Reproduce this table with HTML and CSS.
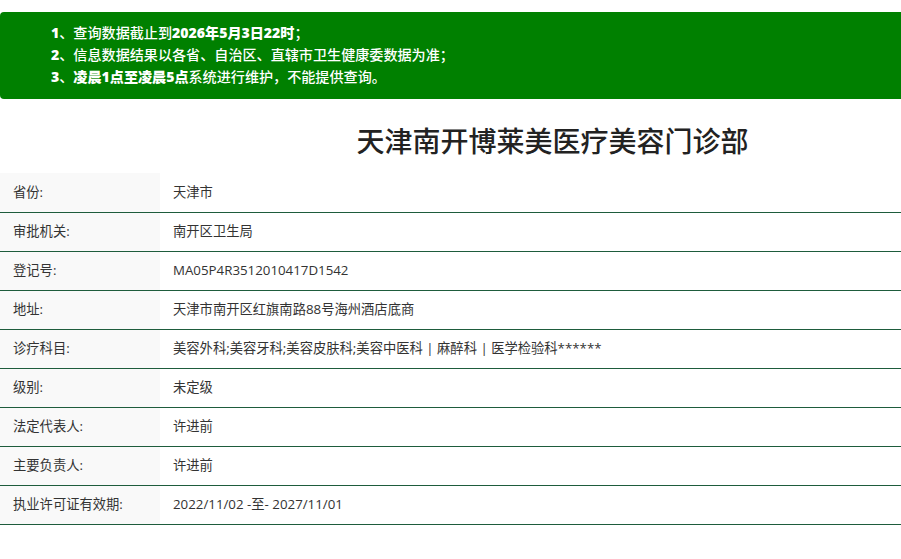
FILE: index.html
```html
<!DOCTYPE html>
<html lang="zh-CN">
<head>
<meta charset="utf-8">
<title>天津南开博莱美医疗美容门诊部</title>
<link rel="stylesheet" href="styles.css">
</head>
<body>
<div class="notice">
  <p><b>1</b>、查询数据截止到<b>2026年5月3日22时</b>；</p>
  <p><b>2</b>、信息数据结果以各省、自治区、直辖市卫生健康委数据为准；</p>
  <p><b>3</b>、<b>凌晨1点至凌晨5点</b>系统进行维护，不能提供查询。</p>
</div>
<h1 class="title">天津南开博莱美医疗美容门诊部</h1>
<table class="info">
  <tr><th>省份:</th><td>天津市</td></tr>
  <tr><th>审批机关:</th><td>南开区卫生局</td></tr>
  <tr><th>登记号:</th><td>MA05P4R3512010417D1542</td></tr>
  <tr><th>地址:</th><td>天津市南开区红旗南路88号海州酒店底商</td></tr>
  <tr><th>诊疗科目:</th><td>美容外科;美容牙科;美容皮肤科;美容中医科 | 麻醉科 | 医学检验科******</td></tr>
  <tr><th>级别:</th><td>未定级</td></tr>
  <tr><th>法定代表人:</th><td>许进前</td></tr>
  <tr><th>主要负责人:</th><td>许进前</td></tr>
  <tr><th>执业许可证有效期:</th><td>2022/11/02 -至- 2027/11/01</td></tr>
</table>
</body>
</html>
```
FILE: styles.css
```css
html, body {
  margin: 0;
  padding: 0;
  background: #fff;
}
body {
  font-family: "Open Sans", "Noto Sans CJK SC", sans-serif;
  color: #333;
  font-size: 13.3px;
}
.notice {
  margin-top: 12px;
  background: #008000;
  color: #fff;
  border-radius: 4px 0 0 4px;
  padding: 10px 0 10px 51px;
  height: 67px;
  font-size: 14.1px;
  font-weight: 500;
}
.notice b {
  font-weight: 800;
}
.notice p {
  margin: 0;
  line-height: 22px;
}
.title {
  margin: 20px 0 0;
  padding-left: 204px;
  text-align: center;
  font-size: 28px;
  font-weight: 500;
  line-height: 44px;
  color: #222;
}
.info {
  margin-top: 10px;
  width: 100%;
  border-collapse: collapse;
}
.info th, .info td {
  height: 39px;
  padding: 0 0 2px 13px;
  box-sizing: border-box;
  text-align: left;
  font-weight: normal;
  border-bottom: 1px solid #1e5c3c;
  vertical-align: middle;
}
.info th {
  width: 160px;
  background: #f9f9f9;
}
```
